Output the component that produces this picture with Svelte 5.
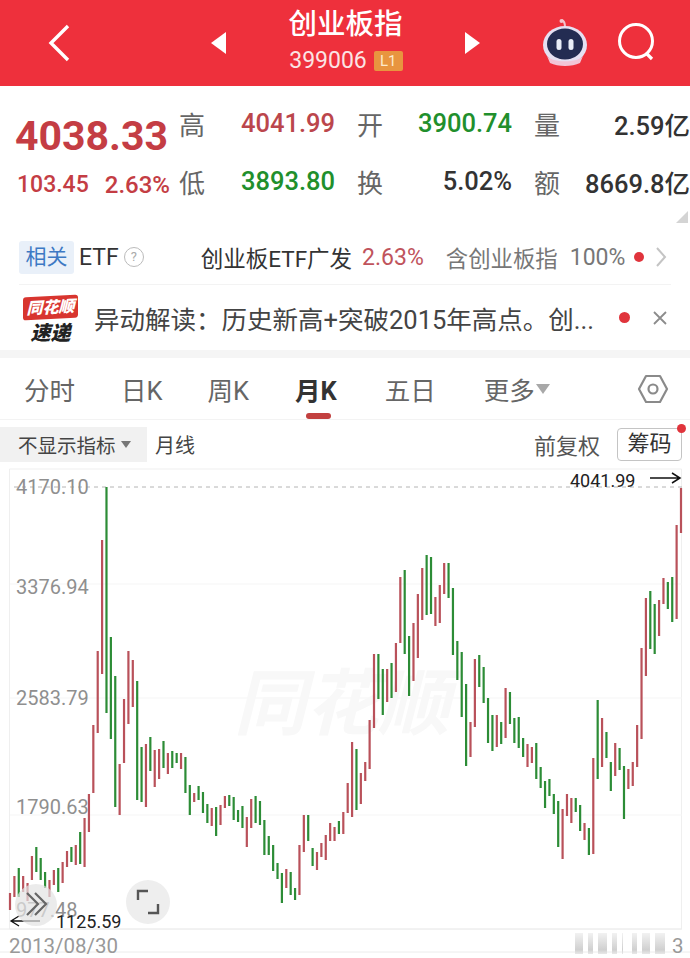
<script>
	// [top, bottom, 1 = red / 0 = green], one per month
	const candles = [
		[893,910,1],[876,897,1],[868,897,0],[876,892,1],[883,901,1],[856,880,1],[847,872,0],[858,880,0],[872,888,0],[880,897,1],
		[870,885,1],[868,892,0],[862,883,1],[851,867,1],[847,862,0],[845,865,1],[832,864,0],[818,867,1],[794,832,1],[725,793,1],
		[651,733,1],[540,674,1],[487,713,0],[637,739,0],[676,807,0],[764,815,1],[699,763,1],[651,724,1],[660,707,1],[681,800,0],
		[747,802,0],[744,807,1],[737,771,0],[750,787,1],[749,779,1],[741,768,0],[753,774,1],[751,768,0],[753,763,0],[753,769,1],
		[757,793,0],[785,815,0],[793,802,1],[786,800,0],[792,813,0],[804,823,0],[808,826,1],[807,836,0],[805,825,1],[796,808,1],
		[795,806,0],[797,820,0],[810,822,0],[806,828,0],[817,847,1],[799,828,1],[796,823,0],[801,825,0],[820,855,0],[836,855,0],
		[845,871,0],[863,879,0],[873,903,0],[869,888,1],[872,895,0],[888,900,0],[845,895,1],[815,852,1],[815,841,0],[848,866,0],
		[852,870,1],[843,857,1],[835,860,1],[823,841,1],[827,841,1],[821,834,0],[812,834,1],[783,813,1],[742,817,1],[749,810,0],
		[773,804,1],[762,781,1],[720,769,1],[654,728,1],[654,699,0],[669,715,0],[669,702,1],[663,698,0],[643,692,1],[577,643,1],
		[570,654,0],[636,696,0],[623,681,1],[594,658,1],[568,620,1],[555,615,0],[557,614,0],[597,626,1],[585,623,1],[563,594,1],
		[563,598,0],[588,655,0],[641,680,0],[652,717,0],[684,766,0],[722,757,1],[659,727,1],[655,687,0],[667,703,0],[698,743,0],
		[715,751,0],[715,747,1],[722,744,0],[688,738,1],[692,724,0],[718,743,0],[717,748,0],[738,757,0],[744,767,1],[747,763,1],
		[743,779,0],[767,788,0],[781,808,0],[779,796,0],[794,814,0],[801,847,0],[809,859,1],[794,816,1],[798,823,1],[798,812,0],
		[805,831,0],[823,840,1],[828,855,0],[758,854,1],[700,779,0],[718,767,1],[732,758,0],[762,791,0],[743,776,1],[748,770,0],
		[766,819,0],[769,789,1],[762,786,1],[725,767,1],[648,739,1],[598,676,1],[591,649,0],[604,654,0],[600,636,1],[578,604,1],
		[582,609,0],[577,622,0],[525,619,1],[488,533,1]
	];
	const step = (681 - 10) / (candles.length - 1);
	const top = 468; // svg starts here on the page

	const stats = [
		['高', '4041.99', 'red'], ['开', '3900.74', 'green'], ['量', '2.59亿', ''],
		['低', '3893.80', 'green'], ['换', '5.02%', ''], ['额', '8669.8亿', '']
	];
	const tabs = [
		['分时', 24, false], ['日K', 46, false], ['周K', 45, false],
		['月K', 46, true], ['五日', 48, false]
	];
	const yLabels = [['4170.10', 494], ['3376.94', 594], ['2583.79', 705], ['1790.63', 814]];
	const blurBars = [[575, 8], [588, 5], [598, 9], [612, 5], [622, 1], [632, 5], [642, 8], [655, 10]];
</script>

<div class="page">
	<header class="topbar">
		<svg class="back" width="26" height="40" viewBox="0 0 26 40"><path d="M22 3 5 20l17 17" fill="none" stroke="#fff" stroke-width="3.4" /></svg>
		<span class="tri tri-left"></span>
		<div class="title">
			<div class="name">创业板指</div>
			<div class="code">399006 <span class="level">L1</span></div>
		</div>
		<span class="tri tri-right"></span>
		<div class="top-icons">
			<svg width="46" height="50" viewBox="0 0 46 50">
				<path d="M23 9c0-4-1-6-3-7" fill="none" stroke="#f3c3cc" stroke-width="2" />
				<circle cx="19.500" cy="3" r="2" fill="#f3c3cc" />
				<ellipse cx="23" cy="27" rx="22" ry="19" fill="#e5e0f2" />
				<path d="M5 38c5 7 31 7 36 0l-3 7c-8 4-22 4-30 0z" fill="#f2c5d6" />
				<ellipse cx="23" cy="26" rx="18" ry="15.500" fill="#232c52" />
				<rect x="14.500" y="21" width="5" height="11" rx="2.500" fill="#e8edf7" />
				<rect x="26.500" y="21" width="5" height="11" rx="2.500" fill="#e8edf7" />
			</svg>
			<svg width="42" height="46" viewBox="0 0 42 46">
				<circle cx="20" cy="21" r="16.500" fill="none" stroke="#fff" stroke-width="3" />
				<path d="m30 33 6 6" stroke="#fff" stroke-width="3.200" />
			</svg>
		</div>
	</header>

	<section class="quote">
		<div class="price">
			<div class="last">4038.33</div>
			<div class="change"><span>103.45</span><span>2.63%</span></div>
		</div>
		<div class="stats">
			{#each stats as [label, value, tone]}
				<div class="stat">
					<span class="stat-label">{label}</span>
					<span class="stat-value {tone}">{value}</span>
				</div>
			{/each}
		</div>
		<span class="corner"></span>
	</section>

	<section class="etf">
		<span class="chip">相关</span>
		<span class="etf-name">ETF</span>
		<span class="help">?</span>
		<span class="fund">创业板ETF广发</span>
		<span class="fund-pct">2.63%</span>
		<span class="holds">含创业板指</span>
		<span class="holds-pct">100%</span>
		<span class="dot"></span>
		<svg class="chev" width="12" height="24" viewBox="0 0 12 24"><path d="m2 3 8 9-8 9" fill="none" stroke="#c4c4c4" stroke-width="2" /></svg>
	</section>

	<section class="news">
		<div class="logo">
			<div class="logo-top">同花顺</div>
			<div class="logo-bottom">速递</div>
		</div>
		<div class="news-text">异动解读：历史新高+突破2015年高点。创...</div>
		<span class="dot"></span>
		<svg class="close" width="16" height="16" viewBox="0 0 16 16"><path d="m2 2 12 12M14 2 2 14" stroke="#8c8c8c" stroke-width="1.800" /></svg>
	</section>

	<nav class="tabs">
		{#each tabs as [label, gap, active]}
			<span class="tab" class:active style="margin-left: {gap}px">{label}</span>
		{/each}
		<span class="tab more">更多<i class="caret big"></i></span>
		<svg class="hex" width="32" height="32" viewBox="0 0 32 32">
			<path d="M9 3h14l7 13-7 13H9L2 16z" fill="none" stroke="#8a8a8a" stroke-width="2.200" stroke-linejoin="round" />
			<circle cx="16" cy="16" r="4.500" fill="none" stroke="#8a8a8a" stroke-width="2.200" />
		</svg>
		<span class="underline"></span>
	</nav>

	<section class="tools">
		<span class="indicator">不显示指标<i class="caret"></i></span>
		<span class="period">月线</span>
		<span class="adjust">前复权</span>
		<span class="chips-btn">筹码<span class="btn-dot"></span></span>
	</section>

	<svg class="chart" width="690" height="490" viewBox="0 {top} 690 490">
		<defs>
			<linearGradient id="smear" x1="0" y1="0" x2="0" y2="1">
				<stop offset="0" stop-color="#f2f2f2" />
				<stop offset="0.8" stop-color="#d0d0d0" />
				<stop offset="1" stop-color="#e8e8e8" />
			</linearGradient>
		</defs>
		<path d="M9.500 469h672v460h-672z" fill="none" stroke="#efefef" />
		<path d="M10 584h672M10 698h672M10 815h672" stroke="#f5f5f5" />
		<path d="M0 952h690M0 929h682" stroke="#ececec" />
		<path d="M14 487h668" stroke="#b4b4b4" stroke-dasharray="4 4" />
		<text x="234" y="729" class="mark">同花顺</text>

		{#each candles as [y1, y2, up], i}
			<rect x={8.9 + i * step} y={y1} width="2.200" height={y2 - y1} fill={up ? '#b9515a' : '#2c8c36'} />
		{/each}

		{#each yLabels as [label, y]}
			<text x="16" {y} class="axis">{label}</text>
		{/each}
		<text x="16" y="917" class="axis">977.48</text>
		<text x="570" y="487" class="extreme">4041.99</text>
		<path d="M650 478h30m-8-5 8 5-8 5" fill="none" stroke="#111" stroke-width="1.500" />
		<text x="56" y="928" class="extreme">1125.59</text>
		<path d="M40 921H11m8-5-8 5 8 5" fill="none" stroke="#111" stroke-width="1.300" />

		<circle cx="36" cy="905" r="21" fill="#e3e3e3" opacity="0.7" />
		<path d="M27 893l11 11-11 11M35 893l11 11-11 11" fill="none" stroke="#666" stroke-width="2.200" />
		<circle cx="148" cy="902" r="22" fill="#eeeeee" />
		<path d="M138 900v-9h10M158 904v9h-10" fill="none" stroke="#555" stroke-width="2.400" />

		<text x="9" y="953" class="date">2013/08/30</text>
		{#each blurBars as [x, w]}
			<rect {x} y="933" width={w} height="21" fill="url(#smear)" />
		{/each}
		<text x="672" y="953" class="date">3</text>
	</svg>
</div>

<style>
	:global(body) {
		background: #fff;
	}
	.page {
		width: 690px;
		height: 958px;
		overflow: hidden;
		font-family: Roboto, "Noto Sans CJK SC", sans-serif;
		color: #333;
	}
	.topbar {
		height: 86px;
		background: #ee303c;
		color: #fff;
		display: grid;
		grid-template-columns: 211px 15px 1fr 15px 210px;
		align-items: center;
		position: relative;
	}
	.back {
		margin-left: 46px;
	}
	.tri {
		width: 0;
		height: 0;
		border-top: 11px solid transparent;
		border-bottom: 11px solid transparent;
	}
	.tri-left {
		border-right: 15px solid #fff;
	}
	.tri-right {
		border-left: 15px solid #fff;
	}
	.title {
		text-align: center;
	}
	.name {
		font-size: 28.500px;
		font-weight: 500;
		line-height: 36px;
		margin-top: -3px;
	}
	.code {
		font-size: 23px;
		line-height: 30px;
		color: #fbe4e4;
		display: flex;
		align-items: center;
		justify-content: center;
		gap: 7px;
		padding-left: 1px;
		margin-top: 3px;
	}
	.level {
		width: 29px;
		height: 20px;
		background: #e8953f;
		color: #fdeacb;
		font-size: 15px;
		line-height: 20px;
		text-align: center;
		border-radius: 2px;
	}
	.top-icons {
		display: flex;
		align-items: center;
		gap: 28px;
		padding-left: 62px;
	}
	.quote {
		height: 142px;
		display: flex;
		position: relative;
		padding: 14px 0 0 15px;
		box-sizing: border-box;
	}
	.price {
		width: 165px;
		flex: none;
		color: #c43d44;
	}
	.last {
		font-size: 41px;
		font-weight: 700;
		line-height: 56px;
		margin-top: 8px;
	}
	.change {
		font-size: 23px;
		font-weight: 500;
		line-height: 30px;
		display: flex;
		gap: 16px;
		margin-top: 6px;
		padding-left: 2px;
		white-space: nowrap;
	}
	.change span:last-child {
		font-size: 24px;
	}
	.stats {
		display: grid;
		grid-template-columns: 155px 154px 155px;
		column-gap: 23px;
		grid-auto-rows: 58px;
	}
	.stat {
		display: flex;
		justify-content: space-between;
		align-items: center;
		height: 46px;
	}
	.stat-label {
		font-size: 26px;
		color: #666;
		margin-left: -1px;
	}
	.stat-value {
		font-size: 25.500px;
		font-weight: 500;
		color: #333;
		white-space: nowrap;
	}
	.red {
		color: #bb464c;
	}
	.green {
		color: #218f2c;
	}
	.corner {
		position: absolute;
		right: 2px;
		bottom: 5px;
		width: 0;
		height: 0;
		border-left: 12px solid transparent;
		border-bottom: 12px solid #d4d4d4;
	}
	.etf {
		height: 57px;
		margin: 0 19px;
		border-bottom: 1px solid #f3f3f3;
		box-sizing: border-box;
		display: flex;
		align-items: center;
		font-size: 22px;
		white-space: nowrap;
		padding-top: 2px;
	}
	.chip {
		width: 55px;
		height: 33px;
		background: #e9f0f9;
		color: #3d79c4;
		border-radius: 3px;
		text-align: center;
		line-height: 33px;
		font-size: 21px;
	}
	.etf-name {
		margin-left: 5px;
		font-size: 23px;
	}
	.help {
		width: 18px;
		height: 18px;
		margin-left: 5px;
		border: 1px solid #bbb;
		border-radius: 50%;
		font-size: 13px;
		line-height: 18px;
		text-align: center;
		color: #aaa;
	}
	.fund {
		margin-left: 57px;
		font-size: 22.500px;
	}
	.fund-pct {
		margin-left: 10px;
		color: #c0535c;
		font-size: 23px;
	}
	.holds {
		margin-left: 22px;
		color: #777;
		font-size: 22.400px;
	}
	.holds-pct {
		margin-left: 12px;
		color: #777;
		font-size: 23px;
	}
	.dot {
		width: 10px;
		height: 10px;
		border-radius: 50%;
		background: #e0343c;
		margin-left: 9px;
		flex: none;
	}
	.chev {
		margin-left: 11px;
	}
	.news {
		height: 65px;
		display: flex;
		align-items: center;
		padding-left: 23px;
		border-bottom: 8px solid #f5f5f5;
		box-sizing: content-box;
	}
	.logo {
		width: 55px;
		flex: none;
		margin-top: 6px;
		text-align: center;
		font-style: italic;
		font-weight: 900;
	}
	.logo-top {
		height: 23px;
		background: #d8352f;
		color: #fff;
		font-size: 16px;
		line-height: 23px;
		border-radius: 3px;
		transform: skewY(-3deg);
	}
	.logo-bottom {
		color: #222;
		font-size: 20px;
		line-height: 26px;
		margin-top: 1px;
	}
	.news-text {
		margin-left: 16px;
		width: 525px;
		font-size: 25.500px;
		color: #444;
		white-space: nowrap;
	}
	.news .dot {
		margin-left: 0;
		width: 11px;
		height: 11px;
	}
	.close {
		margin-left: 22px;
	}
	.tabs {
		height: 62px;
		display: flex;
		align-items: center;
		position: relative;
		border-bottom: 1px solid #f3f3f3;
		box-sizing: border-box;
		font-size: 25.500px;
		color: #666;
	}
	.tab {
		white-space: nowrap;
	}
	.tab.active {
		font-weight: 700;
		color: #333;
	}
	.more {
		margin-left: 48px;
		display: flex;
		align-items: center;
	}
	.caret {
		display: inline-block;
		margin-left: 5px;
		border-left: 5px solid transparent;
		border-right: 5px solid transparent;
		border-top: 7px solid #777;
	}
	.caret.big {
		margin-left: 1px;
		border-left-width: 7px;
		border-right-width: 7px;
		border-top: 10px solid #a8a8a8;
	}
	.hex {
		margin-left: auto;
		margin-right: 21px;
	}
	.underline {
		position: absolute;
		left: 306px;
		top: 55px;
		width: 25px;
		height: 6px;
		border-radius: 3px;
		background: #c2403f;
	}
	.tools {
		height: 48px;
		display: flex;
		align-items: center;
		font-size: 20px;
		padding-right: 8px;
		box-sizing: border-box;
	}
	.indicator {
		width: 147px;
		height: 35px;
		box-sizing: border-box;
		padding-left: 18px;
		background: #f1f1f1;
		display: flex;
		align-items: center;
		font-size: 19.500px;
		color: #444;
		white-space: nowrap;
	}
	.period {
		margin-left: 8px;
		color: #444;
	}
	.adjust {
		margin-left: auto;
		font-size: 22px;
		color: #555;
	}
	.chips-btn {
		margin-left: 17px;
		width: 65px;
		height: 33px;
		box-sizing: border-box;
		border: 1px solid #c4c4c4;
		border-radius: 4px;
		text-align: center;
		line-height: 30px;
		font-size: 22px;
		position: relative;
	}
	.btn-dot {
		position: absolute;
		right: -5px;
		top: -5px;
		width: 9px;
		height: 9px;
		border-radius: 50%;
		background: #e0343c;
	}
	.chart {
		display: block;
	}
	.axis {
		font-size: 20px;
		fill: #8f8f8f;
	}
	.extreme {
		font-size: 18px;
		fill: #222;
	}
	.date {
		font-size: 20.500px;
		fill: #999;
	}
	.mark {
		font-size: 72px;
		font-style: italic;
		font-weight: 700;
		fill: #f8f8f8;
	}
</style>
